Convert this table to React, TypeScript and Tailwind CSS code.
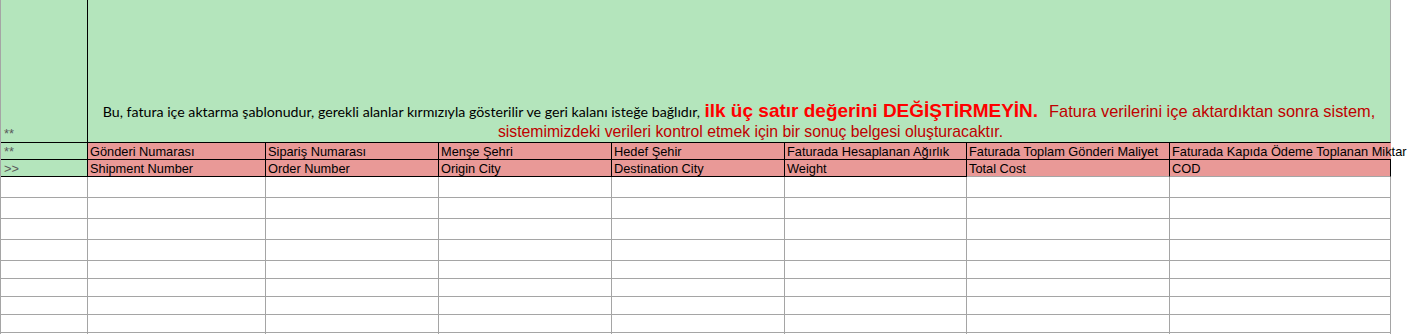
const headersTr = [
  "Gönderi Numarası",
  "Sipariş Numarası",
  "Menşe Şehri",
  "Hedef Şehir",
  "Faturada Hesaplanan Ağırlık",
  "Faturada Toplam Gönderi Maliyet",
  "Faturada Kapıda Ödeme Toplanan Miktar",
];

const headersEn = [
  "Shipment Number",
  "Order Number",
  "Origin City",
  "Destination City",
  "Weight",
  "Total Cost",
  "COD",
];

const arial = "font-['Liberation_Sans',Arial,sans-serif]";
const blankRows = 9;

export default function App() {
  return (
    <div className="h-[334px] w-[1410px] overflow-hidden bg-white">
      <div
        className={`grid grid-cols-[87px_178px_173px_173px_173px_182px_203px_221px] grid-rows-[143px_17px_17px_21px_21px_21px_21px_18px_18px_18px_18px_18px] w-[1391px] border-l border-[#a5a5a5] text-[12.8px] text-black ${arial}`}
      >
        {/* row 1: notice */}
        <div className="flex items-end border-r border-b border-black bg-[#b4e5bc] pl-[3px] pb-[1px] leading-[15px] text-[#5a5a5a]">
          **
        </div>
        <div className="col-span-7 flex flex-col items-center justify-end border-r border-b border-r-[#a5a5a5] border-b-black bg-[#b4e5bc] pb-[2px] text-[16px] text-[#c00000]">
          <div className="mb-[5px] h-[16px] whitespace-nowrap leading-[16px]">
            <span className="font-['Lato','Open_Sans',sans-serif] text-[14.2px] leading-[12px] text-black">
              Bu, fatura içe aktarma şablonudur, gerekli alanlar kırmızıyla gösterilir ve geri kalanı isteğe bağlıdır,
            </span>{" "}
            <span className="text-[19px] font-bold leading-[12px] text-[#ff0000]">
              ilk üç satır değerini DEĞİŞTİRMEYİN.
            </span>
            <span className="ml-[11px] text-[16.4px]">Fatura verilerini içe aktardıktan sonra sistem,</span>
          </div>
          <div className="h-[16px] whitespace-nowrap pl-[23px] text-[15.75px] leading-[16px]">
            sistemimizdeki verileri kontrol etmek için bir sonuç belgesi oluşturacaktır.
          </div>
        </div>

        {/* row 2: turkish headers */}
        <div className="border-r border-b border-black bg-[#b4e5bc] pl-[3px] pt-[1px] leading-[15px] text-[#5a5a5a]">
          **
        </div>
        {headersTr.map((h, i) => (
          <div
            key={h}
            className={`whitespace-nowrap border-b border-black bg-[#e99997] pl-[2px] pt-[1px] leading-[15px] ${
              i < 6 ? "border-r" : ""
            }`}
          >
            {h}
          </div>
        ))}

        {/* row 3: english headers */}
        <div className="border-r border-b border-black bg-[#b4e5bc] pl-[3px] pt-[1px] leading-[15px] text-[#5a5a5a]">
          &gt;&gt;
        </div>
        {headersEn.map((h, i) => (
          <div
            key={h}
            className={`whitespace-nowrap border-r border-b border-r-black bg-[#e99997] pl-[2px] pt-[1px] leading-[15px] ${
              i < 5 ? "border-b-black" : "border-b-[#a5a5a5]"
            }`}
          >
            {h}
          </div>
        ))}

        {/* empty rows */}
        {Array.from({ length: blankRows * 8 }).map((_, i) => (
          <div key={i} className="border-r border-b border-[#a5a5a5]" />
        ))}
      </div>
    </div>
  );
}
